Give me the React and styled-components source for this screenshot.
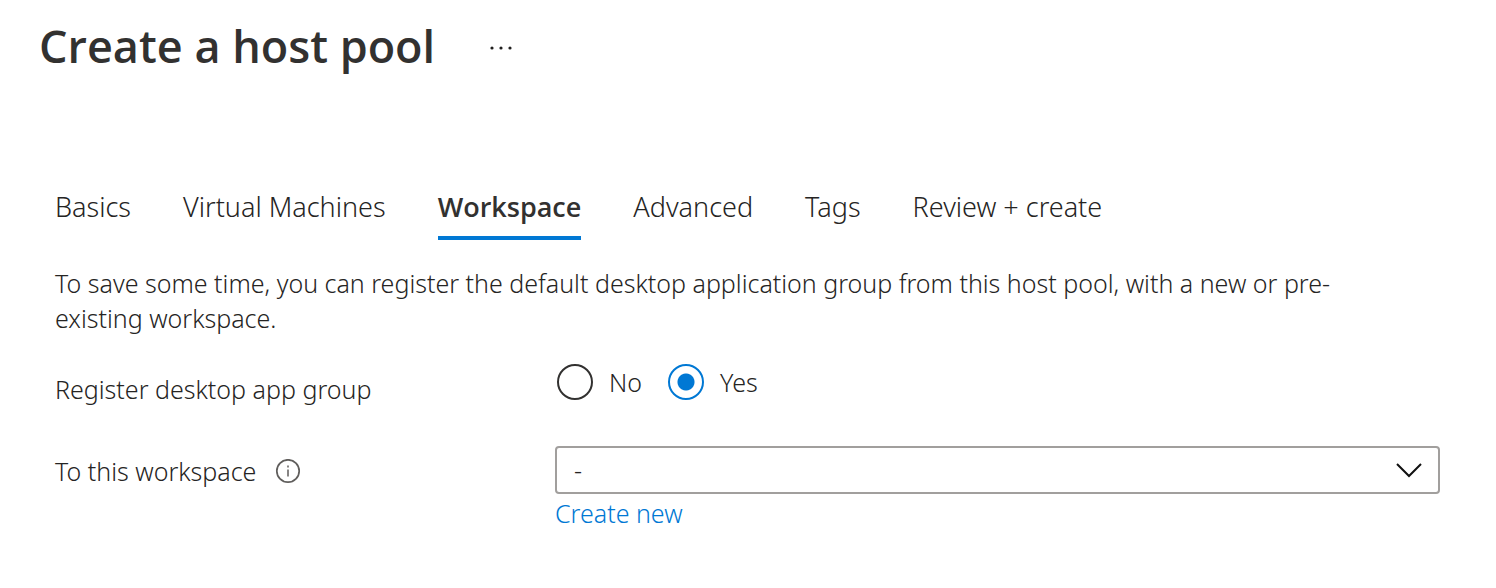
import React, { useState } from "react";
import styled, { createGlobalStyle } from "styled-components";

const Global = createGlobalStyle`
  * { box-sizing: border-box; }
  body { margin: 0; background: #fff; color: #252423; font: 300 25px/35px "Noto Sans", "Open Sans", sans-serif; }
  button, select { font: inherit; color: inherit; }
`;
const Page = styled.main`padding: 14px 56px 56px 55px;`;
const Header = styled.header`display: flex; align-items: center; gap: 53px; height: 64px; margin-left: -16px;`;
const Title = styled.h1`margin: 0; color: #323130; font: 600 45px/64px "Open Sans", sans-serif;`;
const More = styled.button`display: flex; padding: 4px 0 0; border: 0; background: none;`;
const Tabs = styled.nav`display: flex; gap: 52px; margin-top: 106px; font-size: 27px;`;
const Tab = styled.button`
  padding: 5px 0 12px; border: 0; background: none; white-space: nowrap;
  border-bottom: 4px solid ${(p) => (p.$active ? "#0078d4" : "transparent")};
  ${(p) => p.$active && `color: #323130; font-weight: 600; font-family: "Open Sans", sans-serif;`}
`;
const Intro = styled.p`margin: 26px 0 0; max-width: 1330px;`;
const Row = styled.div`display: grid; grid-template-columns: 500px 1fr; align-items: start; margin-top: ${(p) => p.$gap}px;`;
const Label = styled.div`display: flex; align-items: center; gap: 19px; padding-top: 8px;`;
const Radios = styled.div`display: flex; gap: 24px;`;
const Option = styled.label`display: flex; align-items: center; gap: 16px;`;
const Radio = styled.input`
  appearance: none; width: 36px; height: 36px; margin: 0 0 0 2px; border: 2px solid #323130; border-radius: 50%;
  &:checked { border-color: #0078d4; background: radial-gradient(circle, #0078d4 8px, transparent 9px); }
`;
const Field = styled.div`display: grid;`;
const Select = styled.select`
  grid-area: 1 / 1; appearance: none; width: 100%; height: 48px; padding: 0 60px 0 17px;
  border: 2px solid #a19f9d; border-radius: 4px; background: #fff;
`;
const Chevron = styled.svg`grid-area: 1 / 1; place-self: center end; margin-right: 17px; pointer-events: none;`;
const Link = styled.a`display: inline-block; margin-top: 2px; color: #0078d4; text-decoration: none;`;

const tabs = ["Basics", "Virtual Machines", "Workspace", "Advanced", "Tags", "Review + create"];

export default function App() {
  const [active, setActive] = useState("Workspace");
  const [register, setRegister] = useState("Yes");
  return (
    <Page>
      <Global />
      <Header>
        <Title>Create a host pool</Title>
        <More aria-label="More actions">
          <svg width="26" height="6" fill="#201f1e"><circle cx="4" cy="3" r="1.6" /><circle cx="13" cy="3" r="1.6" /><circle cx="22" cy="3" r="1.6" /></svg>
        </More>
      </Header>
      <Tabs>
        {tabs.map((t) => <Tab key={t} $active={t === active} onClick={() => setActive(t)}>{t}</Tab>)}
      </Tabs>
      <Intro>To save some time, you can register the default desktop application group from this host pool, with a new or pre-existing workspace.</Intro>
      <Row $gap={28} role="radiogroup" aria-labelledby="register">
        <Label id="register">Register desktop app group</Label>
        <Radios>
          {["No", "Yes"].map((o) => (
            <Option key={o}><Radio type="radio" name="register" checked={register === o} onChange={() => setRegister(o)} />{o}</Option>
          ))}
        </Radios>
      </Row>
      <Row $gap={39}>
        <Label>
          <label htmlFor="workspace">To this workspace</label>
          <svg width="26" height="26" viewBox="0 0 26 26" fill="none" stroke="#605e5c"><circle cx="13" cy="12" r="11.2" strokeWidth="1.7" /><path d="M13 10.5v7M13 6.5v2" strokeWidth="1.5" /></svg>
        </Label>
        <div>
          <Field>
            <Select id="workspace"><option>-</option></Select>
            <Chevron width="28" height="16" fill="none" stroke="#111" strokeWidth="2"><path d="M2 2l12 12L26 2" /></Chevron>
          </Field>
          <Link href="#new">Create new</Link>
        </div>
      </Row>
    </Page>
  );
}
